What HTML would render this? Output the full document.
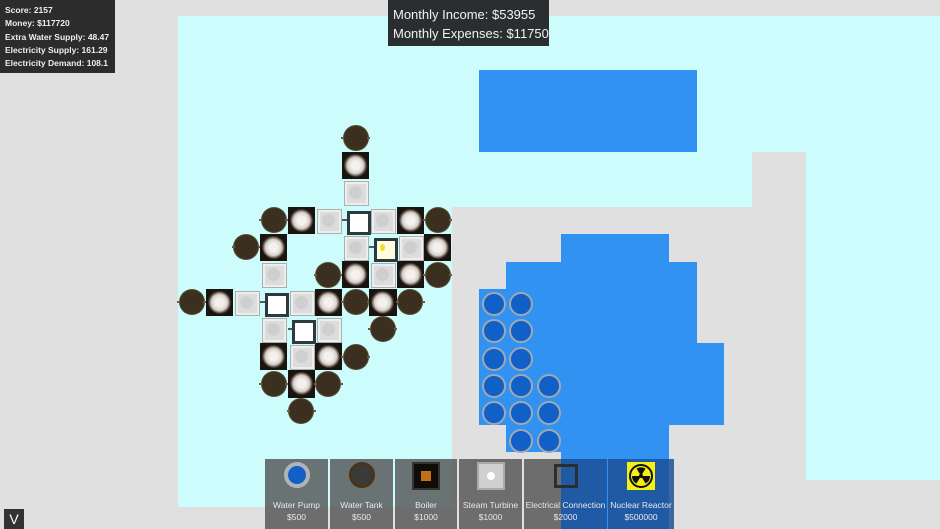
<!DOCTYPE html>
<html><head><meta charset="utf-8"><style>
*{margin:0;padding:0;box-sizing:border-box}
body{width:940px;height:529px;overflow:hidden;background:#e0e0e0;position:relative;font-family:"Liberation Sans",sans-serif}
.a{position:absolute}
.cy{background:#ccfcfc;position:absolute}
.bl{background:#3292f2;position:absolute}
.c{position:absolute;width:27.3px;height:27.3px}
.T::before{content:"";position:absolute;left:1.5px;top:1.5px;width:24px;height:24px;border-radius:50%;background:#3b3020;box-shadow:0 0 0 1px #5a4a30}
.T::after{content:"";position:absolute;left:-1px;top:12.6px;width:29px;height:2px;background:linear-gradient(90deg,#6a5a40 3px,transparent 3px,transparent 26px,#6a5a40 26px)}
.B{background:#1a1410}
.B::before{content:"";position:absolute;left:2px;top:2px;width:23px;height:23px;border-radius:40% 50% 45% 55%;background:radial-gradient(circle,#f4f2f0 25%,#d8d0c8 50%,rgba(150,120,100,.3) 68%,rgba(0,0,0,0) 75%)}
.S::before{content:"";position:absolute;left:2px;top:2px;width:23px;height:23px;background:#dcdcdc;border:1.5px solid #a8b0b0;box-shadow:inset 0 0 0 2px #eee}
.S::after{content:"";position:absolute;left:7px;top:7px;width:13px;height:13px;border-radius:50%;background:#cfcfcf}
.E::after{content:"";position:absolute;left:0;top:12.6px;width:27.3px;height:2px;background:linear-gradient(90deg,#556 5px,transparent 5px,transparent 22px,#556 22px)}
.E::before{content:"";position:absolute;left:4.5px;top:4.5px;width:18px;height:18px;background:#fff;border:3px solid #2c3a40;z-index:1}
.Y::before{background:#fffbe0}
.P::before{content:"";position:absolute;left:3.5px;top:3.5px;width:20px;height:20px;border-radius:50%;background:#1060c8;border:2.5px solid #a0a8b0}
.card{position:absolute;top:459px;height:70px;background:rgba(80,80,80,.8);color:#e8e8e8;font-size:8.5px;text-align:center}
.card .l{position:absolute;left:0;right:0;top:41px;white-space:nowrap}
.card .p{position:absolute;left:0;right:0;top:53px}
.ic{position:absolute;left:50%;top:3px;width:28px;height:28px;margin-left:-14px}
</style></head><body>
<div class="cy" style="left:178px;top:16px;width:762px;height:191px"></div>
<div class="cy" style="left:178px;top:207px;width:274px;height:300px"></div>
<div class="cy" style="left:806px;top:152px;width:134px;height:328px"></div>
<div class="a" style="left:752px;top:152px;width:54px;height:377px;background:#e0e0e0"></div>
<div class="bl" style="left:479px;top:70px;width:218px;height:82px"></div>
<div class="bl" style="left:561px;top:234px;width:108px;height:295px"></div>
<div class="bl" style="left:506px;top:262px;width:191px;height:163px"></div>
<div class="bl" style="left:479px;top:289px;width:28px;height:136px"></div>
<div class="bl" style="left:697px;top:343px;width:27px;height:82px"></div>
<div class="bl" style="left:506px;top:425px;width:55px;height:27px"></div>

<div class="c T" style="left:342.1px;top:124.7px"></div>
<div class="c B" style="left:342.1px;top:152px"></div>
<div class="c S" style="left:342.1px;top:179.3px"></div>
<div class="c T" style="left:260.2px;top:206.6px"></div>
<div class="c B" style="left:287.5px;top:206.6px"></div>
<div class="c S" style="left:314.8px;top:206.6px"></div>
<div class="c E" style="left:342.1px;top:206.6px"></div>
<div class="c S" style="left:369.4px;top:206.6px"></div>
<div class="c B" style="left:396.7px;top:206.6px"></div>
<div class="c T" style="left:424px;top:206.6px"></div>
<div class="c T" style="left:232.9px;top:233.9px"></div>
<div class="c B" style="left:260.2px;top:233.9px"></div>
<div class="c S" style="left:342.1px;top:233.9px"></div>
<div class="c E Y" style="left:369.4px;top:233.9px"><div class="a" style="left:11px;top:10px;width:5px;height:7px;border-radius:50%;background:#f0e020;z-index:2"></div></div>
<div class="c S" style="left:396.7px;top:233.9px"></div>
<div class="c B" style="left:424px;top:233.9px"></div>
<div class="c S" style="left:260.2px;top:261.2px"></div>
<div class="c T" style="left:314.8px;top:261.2px"></div>
<div class="c B" style="left:342.1px;top:261.2px"></div>
<div class="c S" style="left:369.4px;top:261.2px"></div>
<div class="c B" style="left:396.7px;top:261.2px"></div>
<div class="c T" style="left:424px;top:261.2px"></div>
<div class="c T" style="left:178.3px;top:288.5px"></div>
<div class="c B" style="left:205.6px;top:288.5px"></div>
<div class="c S" style="left:232.9px;top:288.5px"></div>
<div class="c E" style="left:260.2px;top:288.5px"></div>
<div class="c S" style="left:287.5px;top:288.5px"></div>
<div class="c B" style="left:314.8px;top:288.5px"></div>
<div class="c T" style="left:342.1px;top:288.5px"></div>
<div class="c B" style="left:369.4px;top:288.5px"></div>
<div class="c T" style="left:396.7px;top:288.5px"></div>
<div class="c S" style="left:260.2px;top:315.8px"></div>
<div class="c E" style="left:287.5px;top:315.8px"></div>
<div class="c S" style="left:314.8px;top:315.8px"></div>
<div class="c T" style="left:369.4px;top:315.8px"></div>
<div class="c B" style="left:260.2px;top:343.1px"></div>
<div class="c S" style="left:287.5px;top:343.1px"></div>
<div class="c B" style="left:314.8px;top:343.1px"></div>
<div class="c T" style="left:342.1px;top:343.1px"></div>
<div class="c T" style="left:260.2px;top:370.4px"></div>
<div class="c B" style="left:287.5px;top:370.4px"></div>
<div class="c T" style="left:314.8px;top:370.4px"></div>
<div class="c T" style="left:287.5px;top:397.7px"></div>

<div class="c P" style="left:478.6px;top:288.5px"></div><div class="c P" style="left:505.9px;top:288.5px"></div>
<div class="c P" style="left:478.6px;top:315.8px"></div><div class="c P" style="left:505.9px;top:315.8px"></div>
<div class="c P" style="left:478.6px;top:343.1px"></div><div class="c P" style="left:505.9px;top:343.1px"></div>
<div class="c P" style="left:478.6px;top:370.4px"></div><div class="c P" style="left:505.9px;top:370.4px"></div><div class="c P" style="left:533.2px;top:370.4px"></div>
<div class="c P" style="left:478.6px;top:397.7px"></div><div class="c P" style="left:505.9px;top:397.7px"></div><div class="c P" style="left:533.2px;top:397.7px"></div>
<div class="c P" style="left:505.9px;top:425px"></div><div class="c P" style="left:533.2px;top:425px"></div>

<div class="a" style="left:0;top:0;width:115px;height:73px;background:#2c2c2c;color:#eee;font-size:8.5px;font-weight:bold;line-height:13.3px;padding:4px 0 0 5px">Score: 2157<br>Money: $117720<br>Extra Water Supply: 48.47<br>Electricity Supply: 161.29<br>Electricity Demand: 108.1</div>
<div class="a" style="left:388px;top:0;width:161px;height:46px;background:#2a2e30;color:#f2f2f2;font-size:13px;line-height:19px;padding:5px 0 0 5px;white-space:nowrap">Monthly Income: $53955<br>Monthly Expenses: $11750</div>

<div class="card" style="left:265px;width:63px"><div class="ic" style="border-radius:50%;background:#1060c8;border:4px solid #b0b4b8;width:26px;height:26px;margin-left:-13px"></div><div class="l">Water Pump</div><div class="p">$500</div></div>
<div class="card" style="left:330px;width:63px"><div class="ic" style="border-radius:50%;background:#3a3a38;border:3px solid #4a3418;width:26px;height:26px;margin-left:-13px"></div><div class="l">Water Tank</div><div class="p">$500</div></div>
<div class="card" style="left:395px;width:62px"><div class="ic" style="background:#100c08;border:2px solid #333"><div class="a" style="left:7px;top:7px;width:10px;height:10px;background:#c07018"></div></div><div class="l">Boiler</div><div class="p">$1000</div></div>
<div class="card" style="left:459px;width:63px"><div class="ic" style="background:#d0d0d0;border:2px solid #aaa"><div class="a" style="left:8px;top:8px;width:8px;height:8px;border-radius:50%;background:#fff"></div></div><div class="l">Steam Turbine</div><div class="p">$1000</div></div>
<div class="card" style="left:524px;width:83px;background:linear-gradient(90deg,rgba(80,80,80,.8) 37px,rgba(30,80,150,.85) 37px)"><div class="ic" style="border:3px solid #2a2e30;width:24px;height:24px;margin-left:-12px;top:5px"></div><div class="l">Electrical Connection</div><div class="p">$2000</div></div>
<div class="card" style="left:608px;width:66px;background:rgba(30,80,150,.85)"><div class="ic" style="background:#f4f010;top:3px"><svg width="28" height="28" viewBox="0 0 28 28"><circle cx="14" cy="14" r="11" fill="none" stroke="#111" stroke-width="2"/><path d="M14 14 L8 4 A11 11 0 0 1 20 4Z M14 14 L26 14 A11 11 0 0 1 20 24Z M14 14 L8 24 A11 11 0 0 1 2 14Z" fill="#111" transform="scale(.75) translate(4.7 4.7)"/><circle cx="14" cy="14" r="2" fill="#111"/></svg></div><div class="l">Nuclear Reactor</div><div class="p">$500000</div></div>

<div class="a" style="left:4px;top:509px;width:20px;height:20px;background:#333;color:#fff;font-size:14px;text-align:center;line-height:20px">V</div>
</body></html>
